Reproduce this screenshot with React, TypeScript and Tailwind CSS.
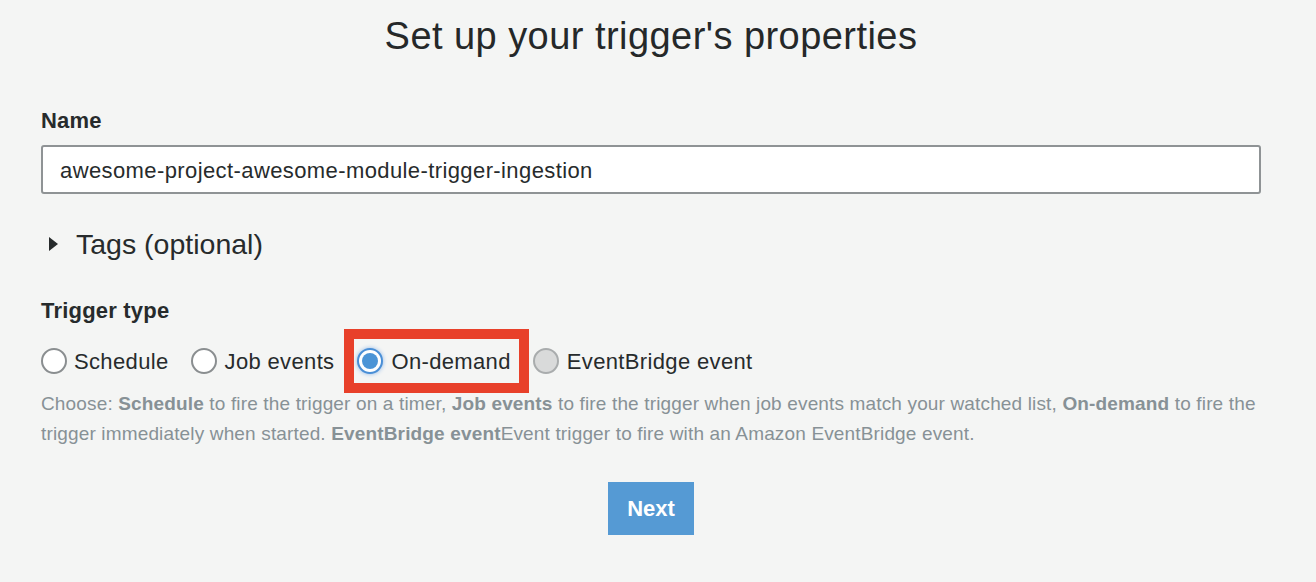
import React from "react";

function Radio({ state }: { state: "off" | "on" | "disabled" }) {
  if (state === "on") {
    return (
      <span className="flex h-[26px] w-[26px] shrink-0 items-center justify-center rounded-full border-2 border-[#4a8fd6] bg-white shadow-[0_0_4px_#8fb8e8]">
        <span className="h-[16px] w-[16px] rounded-full bg-[#4b94d6]" />
      </span>
    );
  }
  if (state === "disabled") {
    return <span className="h-[26px] w-[26px] shrink-0 rounded-full border-2 border-[#a9acad] bg-[#d9dada]" />;
  }
  return <span className="h-[26px] w-[26px] shrink-0 rounded-full border-2 border-[#8a8e90] bg-white" />;
}

export default function App() {
  return (
    <div
      className="h-[582px] w-[1316px] overflow-hidden bg-[#f4f5f4] pl-[41px] pr-[55px] text-[#272b2c]"
      style={{ fontFamily: '"Liberation Sans", Arial, sans-serif' }}
    >
      <h1 className="pt-[14px] text-center text-[38px] leading-[44px] tracking-[0.45px] text-[#252829]">Set up your trigger's properties</h1>

      <div className="mt-[50px] text-[22px] font-bold leading-[26px] tracking-[0.2px]">Name</div>
      <div className="mt-[11px] flex h-[49px] items-center rounded-[3px] border-2 border-[#8f9395] bg-white pb-[1px] pl-[17px] pt-[3px] text-[22px] tracking-[0.4px]">
        awesome-project-awesome-module-trigger-ingestion
      </div>

      <div className="mt-[34px] flex h-[32px] items-center">
        <svg width="10" height="14" viewBox="0 0 10 14" className="ml-[8px]">
          <path d="M0 0 L9 7 L0 14 Z" fill="#272b2c" />
        </svg>
        <span className="ml-[17px] text-[28.5px] leading-[32px]">Tags (optional)</span>
      </div>

      <div className="mt-[38px] text-[22px] font-bold leading-[26px] tracking-[0.2px]">Trigger type</div>

      <div className="mt-[5px] flex h-[64px] items-center text-[22px] tracking-[0.35px]">
        <div className="flex items-center">
          <Radio state="off" />
          <span className="ml-[7px]">Schedule</span>
        </div>
        <div className="ml-[22px] flex items-center">
          <Radio state="off" />
          <span className="ml-[8px]">Job events</span>
        </div>
        <div className="ml-[10px] flex h-[64px] items-center border-[10px] border-[#e8402a] pl-[3px] pr-[8px]">
          <Radio state="on" />
          <span className="ml-[8px]">On-demand</span>
        </div>
        <div className="ml-[4px] flex items-center">
          <Radio state="disabled" />
          <span className="ml-[8px]">EventBridge event</span>
        </div>
      </div>

      <p className="mt-[-4px] text-[19px] leading-[30px] tracking-[0.15px] text-[#879196]">
        Choose: <b>Schedule</b> to fire the trigger on a timer, <b>Job events</b> to fire the trigger when job events match your watched list, <b>On-demand</b> to fire the trigger immediately when started. <b>EventBridge event</b>Event trigger to fire with an Amazon EventBridge event.
      </p>

      <div className="mt-[33px] flex justify-center">
        <button className="h-[53px] w-[86px] bg-[#559ad4] text-[22px] font-bold text-white">Next</button>
      </div>
    </div>
  );
}
